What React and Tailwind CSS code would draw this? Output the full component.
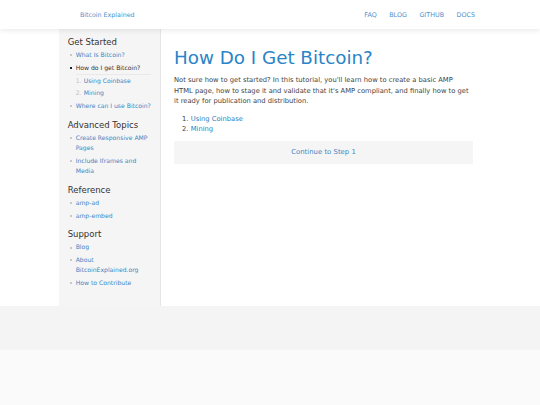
import React from "react";

const font = { fontFamily: '"DejaVu Sans", Verdana, sans-serif' };

function Bullet({ active }) {
  return (
    <span className="flex w-[8px] shrink-0 h-[10.4px] items-center">
      <span className={`ml-[2px] block w-[2px] h-[2px] ${active ? "bg-[#222]" : "bg-[#c9c9c9]"}`} />
    </span>
  );
}

function Item({ children, active, sub }) {
  return (
    <li className="mt-[2.2px]">
      <div className="flex">
        <Bullet active={active} />
        <span className={`leading-[10.4px] ${active ? "text-[#333]" : "text-[#3d86c4]"}`}>{children}</span>
      </div>
      {sub}
    </li>
  );
}

function Heading({ children, first }) {
  return (
    <h3 className={`${first ? "" : "mt-[7.2px]"} mb-[0.3px] text-[8.5px] leading-[12px] text-[#333]`}>{children}</h3>
  );
}

export default function App() {
  return (
    <div className="min-h-[405px] w-[540px] bg-[#fafafa]" style={font}>
      <header className="relative z-10 h-[28.5px] bg-white shadow-[0_1px_6px_rgba(0,0,0,0.10)] flex items-center justify-between pl-[80px] pr-[65px] pt-[1px]">
        <span className="text-[6.3px] leading-[10px] text-[#4a92cc]">Bitcoin Explained</span>
        <nav className="flex gap-[12.5px] text-[6.4px] leading-[10px] text-[#4a92cc]">
          <span>FAQ</span>
          <span>BLOG</span>
          <span>GITHUB</span>
          <span>DOCS</span>
        </nav>
      </header>
      <div className="bg-white">
        <div className="ml-[59px] flex h-[277.5px]">
          <aside className="w-[102px] shrink-0 bg-[#f5f5f5] border-r border-[#e6e6e6] pl-[8.7px] pr-[9px] pt-[7.5px] text-[6.1px]">
            <Heading first>Get Started</Heading>
            <ul>
              <Item>What Is Bitcoin?</Item>
              <Item
                active
                sub={
                  <ol className="mt-[1px] ml-[8px] border-t border-[#e9e9e9]">
                    <li className="flex leading-[10.4px] mt-[0.6px]">
                      <span className="w-[8px] shrink-0 text-[#c0c0c0]">1.</span>
                      <span className="text-[#3d86c4]">Using Coinbase</span>
                    </li>
                    <li className="flex leading-[10.4px] mt-[2.2px]">
                      <span className="w-[8px] shrink-0 text-[#c0c0c0]">2.</span>
                      <span className="text-[#3d86c4]">Mining</span>
                    </li>
                  </ol>
                }
              >
                How do I get Bitcoin?
              </Item>
              <Item>Where can I use Bitcoin?</Item>
            </ul>
            <Heading>Advanced Topics</Heading>
            <ul>
              <Item>Create Responsive AMP Pages</Item>
              <Item>Include Iframes and Media</Item>
            </ul>
            <Heading>Reference</Heading>
            <ul>
              <Item>amp-ad</Item>
              <Item>amp-embed</Item>
            </ul>
            <Heading>Support</Heading>
            <ul>
              <Item>Blog</Item>
              <Item>About BitcoinExplained.org</Item>
              <Item>How to Contribute</Item>
            </ul>
          </aside>
          <main className="w-[312px] pl-[13px] pr-0 pt-[18px]">
            <h1 className="text-[18.3px] leading-[22px] text-[#2a84c6] font-normal">How Do I Get Bitcoin?</h1>
            <p className="mt-[6.5px] text-[6.75px] leading-[10.5px] text-[#444]">
              Not sure how to get started? In this tutorial, you'll learn how to create a basic AMP HTML page, how to stage it and validate that it's AMP compliant, and finally how to get it ready for publication and distribution.
            </p>
            <ol className="mt-[7px] pl-[8px] text-[6.75px] leading-[10px]">
              <li className="flex">
                <span className="w-[8.7px] text-[#444]">1.</span>
                <span className="text-[#2f80c0]">Using Coinbase</span>
              </li>
              <li className="flex">
                <span className="w-[8.7px] text-[#444]">2.</span>
                <span className="text-[#2f80c0]">Mining</span>
              </li>
            </ol>
            <div className="mt-[7px] h-[23px] bg-[#f5f5f5] flex items-center justify-center text-[6.9px] text-[#3d86c4]">
              Continue to Step 1
            </div>
          </main>
        </div>
      </div>
      <div className="h-[44px] bg-[#f4f4f4]" />
    </div>
  );
}
